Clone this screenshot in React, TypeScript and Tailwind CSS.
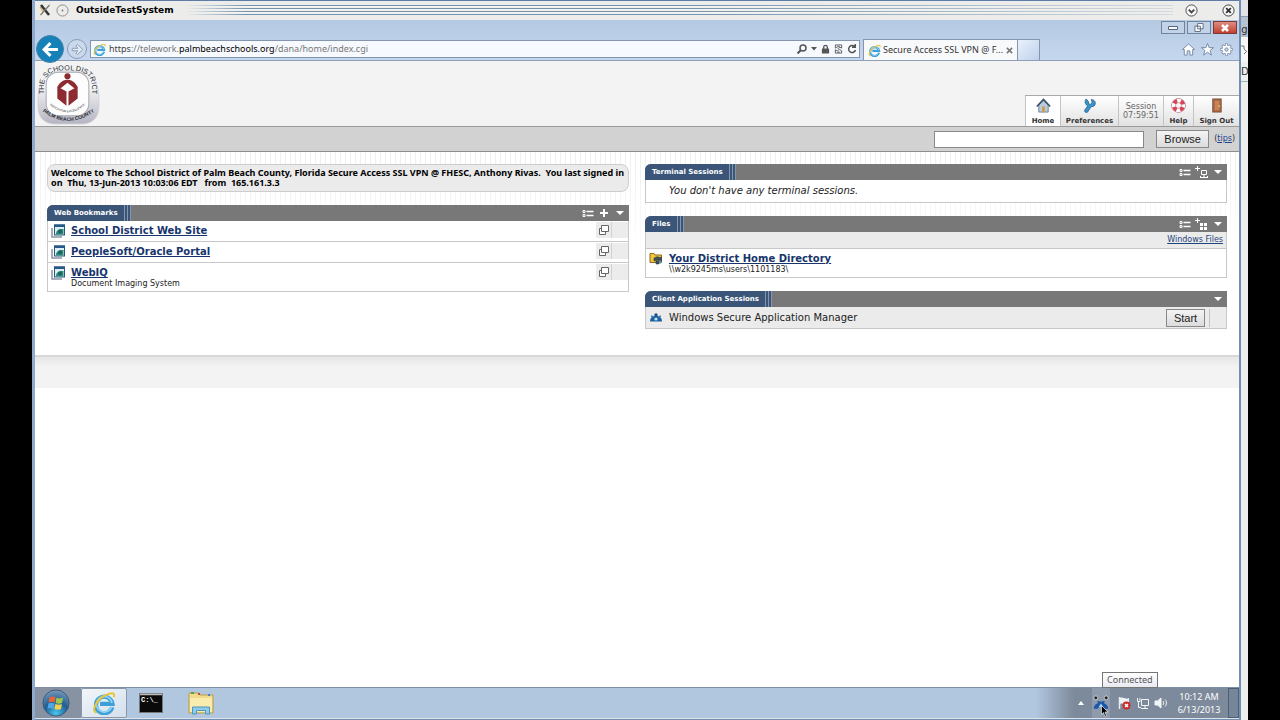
import React from 'react';

interface IconProps {
  className?: string;
}

const IeIcon: React.FC<IconProps> = ({ className }) => (
  <svg viewBox="0 0 24 24" className={className} fill="none" aria-hidden="true">
    <path d="M20.3 16.2A8.3 8.3 0 1 1 20.5 12.8H8" stroke="#3f9fd8" strokeWidth="4.2" />
    <path d="M19.6 16A7.8 7.8 0 1 1 20 12" stroke="#8fd6f5" strokeWidth="1.6" />
    <path d="M4 21.5C-1 20 4.500 9 12 5C18 1.500 23.500 1 22 5.500" stroke="#e8c53a" strokeWidth="2" strokeLinecap="round" />
  </svg>
);

const ArrowIcon: React.FC<IconProps> = ({ className }) => (
  <svg viewBox="0 0 16 16" className={className} fill="none" stroke="currentColor" strokeWidth="2.8" aria-hidden="true">
    <path d="M15 8H2.500M8 2L2 8L8 14" />
  </svg>
);

const ForwardIcon: React.FC<IconProps> = ({ className }) => (
  <svg viewBox="0 0 16 16" className={className} fill="#e3ebf6" stroke="#8c9db6" strokeWidth="1.2" aria-hidden="true">
    <path d="M1.500 6.500H8.500L6 3.500L8 1.800L14.500 8L8 14.200L6 12.500L8.500 9.500H1.500Z" />
  </svg>
);

const DistrictLogo: React.FC<IconProps> = ({ className }) => (
  <svg viewBox="0 0 62 62" className={className} role="img" aria-label="The School District, Palm Beach County">
    <defs>
      <linearGradient id="badge" x1="0" y1="0" x2="0" y2="1">
        <stop offset="0.3" stopColor="#f3f3f5" />
        <stop offset="1" stopColor="#b4b5c2" />
      </linearGradient>
      <path id="arcTop" d="M7 37V24C7 12 16 8 30 8C45 8 54 12 54 24V37" />
      <path id="arcBottom" d="M2 46Q31 70 60 46" />
      <path id="arcMotto" d="M9 39Q30 60 51 39" />
    </defs>
    <path d="M5 20C9 5 53 5 57 20C61 24 61 32 61 44C61 56 53 61 44 61H18C9 61 1 56 1 44C1 32 1 24 5 20Z" fill="url(#badge)" stroke="#cfcfd6" strokeWidth="0.800" />
    <rect x="9" y="10" width="42" height="43" rx="12" fill="#fdfdfd" stroke="#a9a9b4" />
    <g fontFamily="'Liberation Sans', sans-serif" fill="#2b2b33" textAnchor="middle">
      <text fontSize="7"><textPath href="#arcTop" startOffset="50%">THE SCHOOL DISTRICT</textPath></text>
      <text fontSize="5" fontWeight="bold"><textPath href="#arcBottom" startOffset="50%">PALM BEACH COUNTY</textPath></text>
      <text fontSize="3"><textPath href="#arcMotto" startOffset="50%">REACH FOR EXCELLENCE</textPath></text>
    </g>
    <g fill="#8d2b30">
      <circle cx="30" cy="14" r="3" />
      <path d="M20 24L29 29V43L20 36ZM40 24L31 29V43L40 36Z" />
      <path d="M20 25C24 15 36 15 40 25L37 26L30 20.500L23 26Z" />
    </g>
  </svg>
);

const HomeColorIcon: React.FC<IconProps> = ({ className }) => (
  <svg viewBox="0 0 16 16" className={className} aria-hidden="true">
    <path d="M3 7.500V15H13V7.500L8 3Z" fill="#b9cbdc" stroke="#6b8296" />
    <path d="M0.800 9L8 1.500L15.200 9" fill="none" stroke="#34506a" strokeWidth="1.600" />
    <rect x="6.500" y="9" width="3" height="6" fill="#d39a4a" />
  </svg>
);

const WrenchIcon: React.FC<IconProps> = ({ className }) => (
  <svg viewBox="0 0 16 16" className={className} aria-hidden="true">
    <path d="M4.500 1L7 4L6.800 6L9 6.600L10.800 5L10 1.500C14 2 15.500 5.500 13 8.500L9.500 9.500L6 15C4.500 16.500 2 14.500 3 12.800L6 8.500C3 6.500 2.500 3 4.500 1Z" fill="#3b93c8" stroke="#1d5b8b" strokeWidth="0.800" />
  </svg>
);

const LifebuoyIcon: React.FC<IconProps> = ({ className }) => (
  <svg viewBox="0 0 16 16" className={className} fill="none" aria-hidden="true">
    <circle cx="8" cy="8" r="5.200" stroke="#9a5560" strokeWidth="5" />
    <circle cx="8" cy="8" r="5.200" stroke="#fff" strokeWidth="4" />
    <circle cx="8" cy="8" r="5.200" stroke="#dc4257" strokeWidth="4" strokeDasharray="4.080 4.080" strokeDashoffset="-2" />
  </svg>
);

const DoorIcon: React.FC<IconProps> = ({ className }) => (
  <svg viewBox="0 0 16 16" className={className} aria-hidden="true">
    <rect x="4" y="1" width="9" height="14" fill="#a9663f" stroke="#7b5545" />
    <rect x="6" y="3" width="5" height="10" fill="#c98355" />
    <circle cx="11" cy="8.500" r="0.900" fill="#f6d77b" />
  </svg>
);

const ListIcon = () => (
  <svg viewBox="0 0 12 9" className="h-[9px] w-3" fill="none" stroke="#fff" aria-hidden="true">
    <path d="M1 1.500H3V3.500H1ZM1 5.500H3V7.500H1Z" />
    <path d="M4.500 2.500H11.500M4.500 6.500H11.500" strokeWidth="1.400" />
  </svg>
);

const PlusIcon = () => (
  <svg viewBox="0 0 8 8" className="h-2 w-2" stroke="#fff" strokeWidth="2" aria-hidden="true">
    <path d="M4 0V8M0 4H8" />
  </svg>
);

const AddTerminalIcon = () => (
  <svg viewBox="0 0 13 13" className="h-[13px] w-[13px]" fill="none" stroke="#fff" aria-hidden="true">
    <path d="M2.500 0V5M0 2.500H5M6.500 4.500H11.500V8.500H6.500ZM5.500 11.500H12.500M9 9V11M5.500 10V12M12.500 10V12" />
  </svg>
);

const AddFilesIcon = () => (
  <svg viewBox="0 0 13 13" className="h-[13px] w-[13px]" aria-hidden="true">
    <path d="M2.500 0V5M0 2.500H5" stroke="#fff" />
    <path d="M5 5H8V8H5ZM9 5H12V8H9ZM5 9H8V12H5ZM9 9H12V12H9Z" fill="#fff" />
  </svg>
);

const CaretIcon = () => (
  <svg viewBox="0 0 8 5" className="h-1 w-2" fill="#fff" preserveAspectRatio="none" aria-hidden="true">
    <path d="M0 0H8L4 5Z" />
  </svg>
);

const BookmarkIcon = () => (
  <svg viewBox="0 0 15 14" className="h-[14px] w-[15px]" aria-hidden="true">
    <path d="M1 4V13H11" fill="none" stroke="#8a94a3" strokeWidth="1.500" />
    <rect x="3.500" y="1" width="10" height="10" fill="#dbeef3" stroke="#28557a" />
    <rect x="3" y="0.500" width="11" height="2.500" fill="#27588a" />
    <path d="M5 10C5 6 8 4.500 12.500 5V10.500H5Z" fill="#2b8a7d" />
    <circle cx="9" cy="7.500" r="2" fill="#1d6559" />
  </svg>
);

const FolderIcon = () => (
  <svg viewBox="0 0 14 13" className="h-[13px] w-[14px]" aria-hidden="true">
    <path d="M1 1.500H5L6 3H12.500V10.500H1Z" fill="#f0c63f" stroke="#8d6d1c" />
    <path d="M5 6L8.500 4.500V8L5 9ZM9 5L12.500 5.500V9L9 8ZM7 9L10 8.500V12L7 12Z" fill="#42505c" stroke="#24303a" strokeWidth="0.500" />
    <path d="M10 8.500L12 9V11.500H10Z" fill="#5292c9" />
  </svg>
);

const SecureManagerIcon = () => (
  <svg viewBox="0 0 14 10" className="h-[10px] w-[14px]" aria-hidden="true">
    <path d="M1 8.500C1 5 3 3 7 3C11 3 13 5 13 8.500Z" fill="#1c62a3" />
    <path d="M3.500 4.500L2.500 2.500M10.500 4.500L11.500 2.500" stroke="#2b76b8" strokeWidth="1.500" />
    <circle cx="7" cy="2" r="1.700" fill="#1c4e80" />
    <circle cx="7" cy="6" r="1.600" fill="#c6e2f5" />
  </svg>
);

const PopOutIcon = () => (
  <svg viewBox="0 0 10 10" className="h-[10px] w-[10px]" fill="#fff" stroke="#666" aria-hidden="true">
    <path d="M0.500 3.500H6.500V9.500H0.500Z" />
    <path d="M2.500 0.500H9.500V6.500H2.500Z" />
  </svg>
);

const TitleBar = () => (
  <header className="flex h-5 shrink-0 items-center border-t border-[#5d7da6] bg-[#ececea] px-1 pb-px">
    <svg viewBox="0 0 12 12" className="h-3 w-3" fill="none" aria-hidden="true">
      <path d="M2 1L10 11" stroke="#333" strokeWidth="2.500" />
      <path d="M10.500 1L1.500 11" stroke="#777" strokeWidth="1.200" />
      <path d="M1 3L4 8" stroke="#d99a2b" />
    </svg>
    <svg viewBox="0 0 14 14" className="ml-[5px] h-[13px] w-[13px]" fill="none" aria-hidden="true">
      <circle cx="7" cy="7" r="6" stroke="#888" />
      <circle cx="7" cy="7" r="1" fill="#777" />
    </svg>
    <h1 className="ml-[7px] text-[9px] leading-4 font-bold text-black">OutsideTestSystem</h1>
    <div className="mx-3 h-[10px] flex-1 bg-[linear-gradient(to_right,#ececea,transparent_60px,transparent_50%,#ececeacc),repeating-linear-gradient(to_bottom,#7292ae_0,#7292ae_1px,#f7f7f7_1px,#ececea_3px)]" />
    <button aria-label="Shade" className="mr-6">
      <svg viewBox="0 0 14 14" className="h-[13px] w-[13px]" fill="none" stroke="#444">
        <circle cx="7" cy="7" r="6" fill="#f7f7f7" />
        <path d="M4 6L7 9L10 6" strokeWidth="2" />
      </svg>
    </button>
    <button aria-label="Close window">
      <svg viewBox="0 0 14 14" className="h-[13px] w-[13px]" fill="none" stroke="#333">
        <circle cx="7" cy="7" r="6" fill="#f7f7f7" />
        <path d="M4.500 4.500L9.500 9.500M9.500 4.500L4.500 9.500" strokeWidth="2" />
      </svg>
    </button>
  </header>
);

const BrowserChrome = () => (
  <div className="shrink-0 border-b border-[#8f9fb5] bg-gradient-to-b from-[#b4c9e2] to-[#c5d7ef]">
    <div className="flex justify-end gap-[2px] px-[2px] pt-px pb-1">
      <button aria-label="Minimize" className="flex h-[13px] w-6 items-center justify-center border border-[#71839f] bg-[#c2d3e8]">
        <svg viewBox="0 0 10 4" className="h-1 w-[10px]" fill="#fff" stroke="#56657d"><path d="M0.500 0.500H9.500V3.500H0.500Z" /></svg>
      </button>
      <button aria-label="Restore" className="flex h-[13px] w-6 items-center justify-center border border-[#71839f] bg-[#c2d3e8]">
        <svg viewBox="0 0 10 10" className="h-[9px] w-[10px]" fill="#fff" stroke="#56657d"><path d="M3.500 0.500H9.500V6.500H3.500ZM0.500 3.500H6.500V9.500H0.500Z" /></svg>
      </button>
      <button aria-label="Close" className="flex h-[13px] w-6 items-center justify-center border border-[#7c3a3a] bg-gradient-to-b from-[#dc8d82] to-[#c23c2c]">
        <svg viewBox="0 0 10 8" className="h-2 w-[10px]" stroke="#fff" strokeWidth="2.500"><path d="M2 1L8 7M8 1L2 7" /></svg>
      </button>
    </div>
    <div className="flex h-[22px] items-center">
      <button aria-label="Back" className="z-10 ml-px flex h-7 w-7 shrink-0 items-center justify-center rounded-full border border-[#4d82a8] bg-[#1581b8] text-white">
        <ArrowIcon className="h-[17px] w-[17px]" />
      </button>
      <button aria-label="Forward" className="ml-[3px] flex h-5 w-5 shrink-0 items-center justify-center rounded-full border border-[#8b9bb3] bg-[#cbd9ec]">
        <ForwardIcon className="h-[13px] w-[13px]" />
      </button>
      <div className="ml-[3px] flex h-[18px] min-w-0 flex-1 items-center border border-[#8595ad] bg-[#f6f9fe] px-[2px] font-['Noto_Sans','Open_Sans',sans-serif] text-[9px]">
        <IeIcon className="mr-[3px] h-[13px] w-[13px] shrink-0" />
        <div className="min-w-0 flex-1 truncate text-[#777]">
          <span className="text-[#444]">https</span>://telework.<span className="text-black">palmbeachschools.org</span>/dana/home/index.cgi
        </div>
        <div className="flex items-center gap-1 text-[#555]">
          <svg viewBox="0 0 10 10" className="h-[10px] w-[10px]" fill="none" stroke="currentColor" strokeWidth="1.500"><circle cx="6" cy="4" r="3" /><path d="M4 6L0.500 9.500" strokeWidth="2" /></svg>
          <svg viewBox="0 0 6 4" className="h-1 w-[6px]" fill="currentColor"><path d="M0 0H6L3 3.500Z" /></svg>
          <svg viewBox="0 0 10 10" className="h-[10px] w-[9px]" fill="currentColor"><path d="M1 4.500H9V10H1Z" /><path d="M3 5V3A2 2 0 0 1 7 3V5" fill="none" stroke="currentColor" strokeWidth="1.500" /></svg>
          <svg viewBox="0 0 10 10" className="h-[10px] w-[9px]" fill="none" stroke="currentColor"><path d="M1.500 4V0.500H8.500V4L6.500 3L4.500 4.500L3 3ZM1.500 6L4 7L6 5.500L8.500 7V9.500H1.500ZM3.500 2H6.500M3.500 8.500H6.500" /></svg>
          <svg viewBox="0 0 10 10" className="h-[10px] w-[10px]" fill="none" stroke="currentColor" strokeWidth="1.500"><path d="M8 3A3.500 3.500 0 1 0 8.500 6M5 3.200H8.300V0" /></svg>
        </div>
      </div>
      <div className="ml-[3px] flex h-[21px] w-[155px] shrink-0 items-center self-end border border-b-0 border-[#8595ad] bg-[#f8f9fb] px-1 font-['Noto_Sans','Open_Sans',sans-serif] text-[9px] text-[#333]">
        <IeIcon className="mr-[2px] h-[13px] w-[13px] shrink-0" />
        <span className="flex-1 whitespace-nowrap">Secure Access SSL VPN @ F...</span>
        <button aria-label="Close tab">
          <svg viewBox="0 0 8 8" className="h-[7px] w-[7px]" stroke="#777" strokeWidth="1.800"><path d="M1 1L7 7M7 1L1 7" /></svg>
        </button>
      </div>
      <button aria-label="New tab" className="h-[21px] w-[22px] shrink-0 self-end border border-b-0 border-l-0 border-[#8595ad] bg-gradient-to-br from-[#e9f0fa] to-[#bfd2ec]" />
      <div className="flex w-[199px] shrink-0 items-center justify-end gap-[6px] pr-[6px]">
        <svg viewBox="0 0 14 14" className="h-[13px] w-[13px]" fill="#fff" stroke="#7587a1"><path d="M7 1L13.500 7H11.500V13H8.500V8.500H5.500V13H2.500V7H0.500Z" /></svg>
        <svg viewBox="0 0 14 14" className="h-[13px] w-[13px]" fill="#fff" stroke="#7587a1"><path d="M7 0.500L8.700 5H13.500L9.800 8L11.200 13L7 10L2.800 13L4.200 8L0.500 5H5.300Z" /></svg>
        <svg viewBox="0 0 14 14" className="h-[13px] w-[13px]" fill="none">
          <path d="M7 0.500V13.500M0.500 7H13.500M2.400 2.400L11.600 11.600M11.600 2.400L2.400 11.600" stroke="#7587a1" strokeWidth="3.200" />
          <circle cx="7" cy="7" r="4.700" fill="#fff" stroke="#7587a1" strokeWidth="0.800" />
          <path d="M7 1.200V12.800M1.200 7H12.800M2.900 2.900L11.100 11.100M11.100 2.900L2.900 11.100" stroke="#fff" strokeWidth="1.600" />
          <circle cx="7" cy="7" r="1.800" fill="#c5d7ef" stroke="#7587a1" />
        </svg>
      </div>
    </div>
  </div>
);

interface NavItemProps {
  label: string;
  width: string;
  icon: React.ReactNode;
  active?: boolean;
}

const NavItem: React.FC<NavItemProps> = ({ label, width, icon, active }) => (
  <a
    href="#"
    className={`flex flex-col items-center justify-between border-l border-[#c4c4c4] pt-[2px] text-[7px] leading-[10px] font-bold text-[#333] ${width} ${active ? 'bg-white' : 'bg-gradient-to-b from-white to-[#e2e2e2]'}`}
  >
    {icon}
    {label}
  </a>
);

const PageHeader = () => (
  <div className="flex h-[65px] shrink-0 items-start justify-between bg-[#f3f3f3]">
    <DistrictLogo className="mt-px ml-[2px] h-[63px] w-[63px]" />
    <nav className="flex h-[31px] self-end border-t border-[#a9a9a9]">
      <NavItem label="Home" width="w-[35px]" active icon={<HomeColorIcon className="h-[15px] w-[15px]" />} />
      <NavItem label="Preferences" width="w-[58px]" icon={<WrenchIcon className="h-[15px] w-[15px]" />} />
      <div className="flex w-[45px] flex-col items-center justify-center border-l border-[#c4c4c4] bg-gradient-to-b from-white to-[#e2e2e2] text-[8px] leading-[9px] text-[#666]">
        <span>Session</span>
        <span>07:59:51</span>
      </div>
      <NavItem label="Help" width="w-[30px]" icon={<LifebuoyIcon className="h-[15px] w-[15px]" />} />
      <NavItem label="Sign Out" width="w-[46px]" icon={<DoorIcon className="h-[15px] w-[15px]" />} />
    </nav>
  </div>
);

const grayButton = "border border-[#888] bg-gradient-to-b from-[#f4f4f4] to-[#dcdcdc] font-['Liberation_Sans',sans-serif] text-[11px] leading-4 text-[#222]";

const BrowseBar = () => (
  <form className="flex h-[26px] shrink-0 items-center justify-end border-y border-t-[#9b9b9b] border-b-[#8e8e8e] bg-[#d2d2d2] pr-1 text-[8px]">
    <input aria-label="Address to browse" className="mr-3 h-[17px] w-[210px] border border-[#888] bg-white px-1" />
    <button type="button" className={`mr-[5px] h-[18px] w-[53px] ${grayButton}`}>Browse</button>
    <span className="text-[#333]">(<a href="#" className="text-[#1f3f8f] underline">tips</a>)</span>
  </form>
);

interface PanelProps {
  title: string;
  tools?: React.ReactNode;
  children: React.ReactNode;
}

const Panel: React.FC<PanelProps> = ({ title, tools, children }) => (
  <section>
    <div className="flex h-4 rounded-tl-md bg-[#787878]">
      <h2 className="flex items-center rounded-tl-md bg-[#3a5578] pr-1 pl-[7px] text-[7px] font-bold whitespace-nowrap text-white">{title}</h2>
      <div className="w-[9px] bg-[repeating-linear-gradient(to_right,#3a5578_0,#3a5578_2px,#8496ab_2px,#8496ab_3px)]" />
      <div className="flex flex-1 items-center justify-end gap-[6px] pr-[5px]">
        {tools && <div className="flex items-center gap-1">{tools}</div>}
        <button aria-label={`Collapse ${title}`}><CaretIcon /></button>
      </div>
    </div>
    <div className="border border-t-0 border-[#c8c8c8] bg-white">{children}</div>
  </section>
);

const bookmarks = [
  { name: 'School District Web Site' },
  { name: 'PeopleSoft/Oracle Portal' },
  { name: 'WebIQ', note: 'Document Imaging System' },
];

const Bookmarks = () => (
  <Panel
    title="Web Bookmarks"
    tools={
      <>
        <button aria-label="Arrange bookmarks"><ListIcon /></button>
        <button aria-label="Add bookmark" className="px-[2px]"><PlusIcon /></button>
      </>
    }
  >
    <ul>
      {bookmarks.map(item => (
        <li key={item.name} className="flex items-start border-b border-[#c8c8c8] last:border-b-0">
          <div className="w-[23px] shrink-0 pt-[3px] pl-[3px]"><BookmarkIcon /></div>
          <div className="flex-1 pt-[3px] pb-[3px]">
            <a href="#" className="block w-fit text-[10px] leading-[14px] font-bold text-[#17356b] underline">{item.name}</a>
            {item.note && <p className="text-[8px] leading-[8px] text-[#222]">{item.note}</p>}
          </div>
          <button aria-label={`Open ${item.name} in new window`} className="mt-px flex h-4 w-4 items-center justify-center border-r border-[#d2d2d2] bg-[#ececec]">
            <PopOutIcon />
          </button>
          <div className="mt-px h-4 w-4 bg-[#ececec]" />
        </li>
      ))}
    </ul>
  </Panel>
);

const Content = () => (
  <main className="grid shrink-0 grid-cols-2 gap-4 bg-[linear-gradient(to_bottom,#ffffff66,white_110px),repeating-linear-gradient(to_right,#e4e4e4_0,#e4e4e4_1px,#fff_1px,#fff_5px)] px-3 pt-3 pb-[26px]">
    <div className="flex flex-col gap-[13px]">
      <p className="rounded-lg border border-[#cdcdcd] bg-[#ebebeb] px-[3px] py-[3px] font-['Noto_Sans','Open_Sans',sans-serif] text-[9px] leading-[10px] font-bold whitespace-pre text-black">
        {'Welcome to The School District of Palm Beach County, Florida Secure Access SSL VPN @ FHESC, Anthony Rivas.  You last signed in\non  Thu, 13-Jun-2013 10:03:06 EDT   from  165.161.3.3'}
      </p>
      <Bookmarks />
    </div>
    <div className="flex flex-col gap-[13px]">
      <Panel
        title="Terminal Sessions"
        tools={
          <>
            <button aria-label="Arrange sessions"><ListIcon /></button>
            <button aria-label="Add session"><AddTerminalIcon /></button>
          </>
        }
      >
        <p className="py-1 pl-[23px] text-[10px] leading-[14px] text-[#222] italic">You don't have any terminal sessions.</p>
      </Panel>
      <Panel
        title="Files"
        tools={
          <>
            <button aria-label="Arrange files"><ListIcon /></button>
            <button aria-label="Add files"><AddFilesIcon /></button>
          </>
        }
      >
        <div className="flex h-[17px] items-center justify-end border-b border-[#c8c8c8] bg-[#ebebeb] pr-[3px] text-[8px]">
          <a href="#" className="text-[#1f447c] underline">Windows Files</a>
        </div>
        <div className="flex items-start py-[3px]">
          <div className="w-[23px] shrink-0 pl-[3px]"><FolderIcon /></div>
          <div>
            <a href="#" className="block w-fit text-[10px] leading-[14px] font-bold text-[#17356b] underline">Your District Home Directory</a>
            <p className="text-[8px] leading-[8px] text-[#222]">{'\\\\w2k9245ms\\users\\1101183\\'}</p>
          </div>
        </div>
      </Panel>
      <Panel title="Client Application Sessions">
        <div className="flex h-[21px] items-center bg-[#ebebeb] text-[10px] text-[#222]">
          <div className="w-[23px] shrink-0 pl-[3px]"><SecureManagerIcon /></div>
          <span className="flex-1">Windows Secure Application Manager</span>
          <button className={`h-[18px] w-[39px] ${grayButton}`}>Start</button>
          <div className="ml-1 h-[18px] w-[17px] border-l border-[#c4c4c4]" />
        </div>
      </Panel>
    </div>
  </main>
);

const Tray = () => (
  <div className="flex items-center bg-gradient-to-r from-transparent to-[#7d8a9b] to-[38px] pl-[42px] font-['Noto_Sans','Open_Sans',sans-serif]">
    <button aria-label="Show hidden icons">
      <svg viewBox="0 0 6 4" className="h-1 w-[6px]" fill="#fff"><path d="M3 0L6 4H0Z" /></svg>
    </button>
    <div className="relative ml-2 flex h-full w-[18px] items-center justify-center bg-[#8e9bac]">
      <svg viewBox="0 0 14 14" className="h-4 w-4" aria-hidden="true">
        <circle cx="2.500" cy="2.500" r="1.700" fill="#222" stroke="#eee" strokeWidth="0.600" />
        <circle cx="11.500" cy="2.500" r="1.700" fill="#222" stroke="#eee" strokeWidth="0.600" />
        <path d="M0.500 12C1 9 2.500 7.500 4.500 7L3.500 5L7 6L10.500 5L9.500 7C12 8 13 9.500 13.500 12H10L7 8.500L4 12Z" fill="#1f57a8" />
        <path d="M5 10.500L7 7.500L9 10.500Z" fill="#9ed8fa" />
      </svg>
      <div role="tooltip" className="absolute bottom-full left-[10px] border border-[#767676] bg-gradient-to-b from-white to-[#e9eaf2] px-1 text-[9px] leading-[14px] whitespace-nowrap text-[#555]">Connected</div>
      <svg viewBox="0 0 8 12" className="absolute top-[17px] left-[9px] h-3 w-2" fill="#000" stroke="#fff" strokeWidth="0.600" aria-hidden="true">
        <path d="M0.500 0.500V9.500L2.500 7.500L4 11.500L5.500 11L4 7H7Z" />
      </svg>
    </div>
    <svg viewBox="0 0 14 14" className="ml-[7px] h-[14px] w-[14px]" aria-hidden="true">
      <path d="M2.500 1V13" stroke="#e9edf2" strokeWidth="1.500" />
      <path d="M3 2C6 0.500 8 4 12 2V8C8 9.500 6 6.500 3 8Z" fill="#eef1f5" />
      <circle cx="9.500" cy="9.500" r="4" fill="#cb2b2b" />
      <path d="M8 8L11 11M11 8L8 11" stroke="#fff" strokeWidth="1.500" />
    </svg>
    <svg viewBox="0 0 14 14" className="ml-[5px] h-[14px] w-[14px]" fill="none" stroke="#f2f5f8" aria-hidden="true">
      <path d="M5.500 3.500H12.500V9.500H5.500ZM5 12.500H12M9 9.500V12M1.500 2V5.500H4V2M2.500 6V11.500H5" />
    </svg>
    <svg viewBox="0 0 14 14" className="ml-1 h-[14px] w-[14px]" fill="none" stroke="#f2f5f8" aria-hidden="true">
      <path d="M1 5H3.500L7 2V12L3.500 9H1Z" fill="#f2f5f8" />
      <path d="M9 5C10 6 10 8 9 9M11 3.500C13 5.500 13 8.500 11 10.500" />
    </svg>
    <div className="ml-[6px] w-[50px] text-center text-[9px] leading-[13px] text-white">
      <div>10:12 AM</div>
      <div>6/13/2013</div>
    </div>
    <button aria-label="Show desktop" className="ml-1 h-full w-[11px] border border-[#505e70] bg-[#75859a]" />
  </div>
);

const Taskbar = () => (
  <footer className="flex h-[31px] shrink-0 border-t border-[#7f8fa3] bg-[#b1c7e0]">
    <button aria-label="Start menu" className="flex w-[46px] items-center justify-center bg-[#8792a2] pr-1">
      <svg viewBox="0 0 30 30" className="h-7 w-7">
        <defs>
          <radialGradient id="orb" cx="0.5" cy="0.9" r="0.9">
            <stop offset="0" stopColor="#48c6ee" />
            <stop offset="0.5" stopColor="#1f5f94" />
            <stop offset="1" stopColor="#7c9bb9" />
          </radialGradient>
        </defs>
        <circle cx="15" cy="15" r="14" fill="url(#orb)" stroke="#3c5672" />
        <path d="M8 9C10.500 7.500 12.500 8 14.500 9L13.500 14.500C11.500 13.500 9.500 13.500 7 14.500Z" fill="#e8653a" />
        <path d="M15.500 9.500C18 10.500 20 10.500 22.500 9.500L21.500 15C19 16 17 16 14.500 15Z" fill="#9cc94a" />
        <path d="M6.800 15.500C9 14.500 11 14.500 13.300 15.500L12.300 21C10 20 8.500 20 6 21Z" fill="#4fa7e6" />
        <path d="M14.300 16C17 17 19 17 21.300 16L20.300 21.500C18 22.500 16 22.500 13.300 21.500Z" fill="#f8cf4c" />
      </svg>
    </button>
    <button aria-label="Internet Explorer" className="flex w-[46px] items-center justify-center rounded-xs border border-[#8b98aa] bg-gradient-to-br from-[#f2f6fa] to-[#d3dfec]">
      <IeIcon className="h-6 w-6" />
    </button>
    <button aria-label="Command prompt" className="ml-3">
      <svg viewBox="0 0 24 20" className="h-5 w-6">
        <rect x="0.500" y="0.500" width="23" height="19" fill="#0a0a0a" stroke="#777" />
        <path d="M1 1.500H23" stroke="#bbb" strokeWidth="1.500" />
        <text x="2" y="9" fontSize="7" fill="#fff" fontFamily="'Liberation Mono', monospace" fontWeight="bold">C:\_</text>
      </svg>
    </button>
    <button aria-label="File explorer" className="ml-[25px]">
      <svg viewBox="0 0 26 24" className="h-6 w-[26px]">
        <path d="M1 2H10L12 4H25V22H1Z" fill="#f0dc8c" stroke="#b89d4c" />
        <path d="M3 2H6" stroke="#5c9d58" strokeWidth="2" />
        <path d="M10 3H12" stroke="#c6483c" strokeWidth="2" />
        <path d="M20 4H22" stroke="#4a7fc0" strokeWidth="2" />
        <path d="M2 7H24V21H2Z" fill="#f9ecae" />
        <path d="M4.500 23V16H21.500V23H17.500V19.500H8.500V23Z" fill="#8fcbea" stroke="#4d94bf" />
      </svg>
    </button>
    <div className="flex-1" />
    <Tray />
  </footer>
);

// sliver of the window that sits behind the main one
const BackWindow = () => (
  <div className="flex w-[7px] shrink-0 flex-col overflow-hidden bg-[#efefed] text-[10px] text-[#333]">
    <div className="h-[17px] border-b border-[#8b9bb0] bg-[#e2e4e8]" />
    <div className="flex h-5 items-end justify-center bg-[#b7c2d0]">g</div>
    <div className="flex h-[25px] items-center bg-[#f7f7f7]">
      <svg viewBox="0 0 7 12" className="h-3 w-[7px]" fill="none" stroke="#777"><path d="M0 2H3V5L6 8M3 10L6 7" /></svg>
    </div>
    <div className="flex h-5 items-center border-b border-[#9fb5bd]">D</div>
  </div>
);

const App: React.FC = () => {
  return (
    <div className="flex h-screen overflow-hidden bg-black px-8 font-['DejaVu_Sans',Verdana,sans-serif]">
      <div className="flex min-w-0 flex-1 flex-col border-r-2 border-l-[3px] border-r-[#6f8fb5] border-l-[#90aacb] bg-white">
        <TitleBar />
        <BrowserChrome />
        <PageHeader />
        <BrowseBar />
        <Content />
        <div className="h-[33px] shrink-0 border-t-2 border-[#d8d8d8] bg-gradient-to-b from-[#e6e6e6] to-[#f3f3f3] to-[10px]" />
        <div className="flex-1" />
        <Taskbar />
        <div className="h-[2px] shrink-0 border-b border-[#6f8fb5] bg-[#dfe3e8]" />
      </div>
      <BackWindow />
    </div>
  );
};

export default App;
